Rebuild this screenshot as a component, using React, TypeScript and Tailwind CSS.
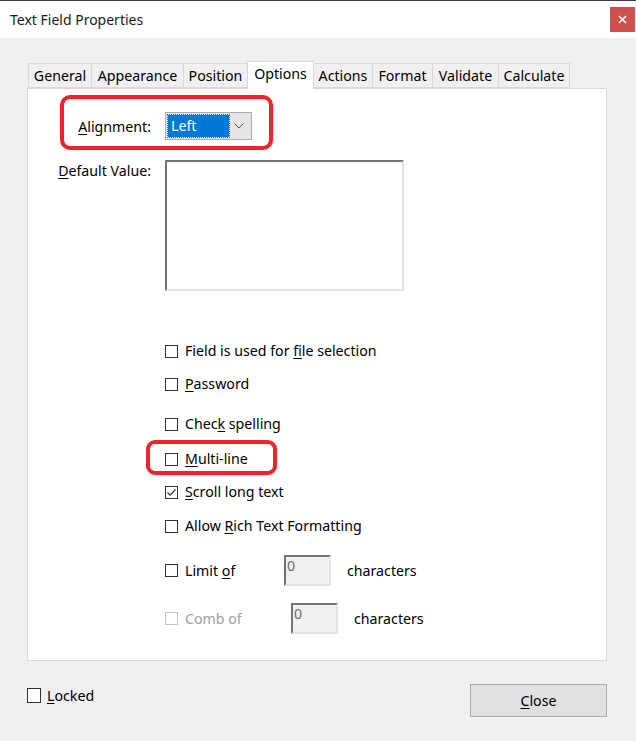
import React from 'react';

const font = { fontFamily: '"Noto Sans", "Open Sans", sans-serif' };

const U: React.FC<{ children: React.ReactNode }> = ({ children }) => (
  <span className="underline underline-offset-2 decoration-1">{children}</span>
);

const Check: React.FC<{ checked?: boolean; disabled?: boolean }> = ({ checked, disabled }) => (
  <span
    className={`w-[13px] h-[13px] flex items-center justify-center bg-white border shrink-0 ${
      disabled ? 'border-[#c5c5c5]' : 'border-[#333]'
    }`}
  >
    {checked && (
      <svg width="11" height="11" viewBox="0 0 11 11">
        <path d="M1.5 5.5 L4.2 8.2 L9.5 2.5" fill="none" stroke="#333" strokeWidth="1.2" />
      </svg>
    )}
  </span>
);

const CheckRow: React.FC<{ children: React.ReactNode; checked?: boolean; className?: string }> = ({
  children,
  checked,
  className = '',
}) => (
  <div className={`flex items-center h-[20px] gap-[7px] pl-[137px] ${className}`}>
    <Check checked={checked} />
    <span>{children}</span>
  </div>
);

const tabs = ['General', 'Appearance', 'Position', 'Options', 'Actions', 'Format', 'Validate', 'Calculate'];
const tabWidths = ['w-[64px]', 'w-[93px]', 'w-[65px]', 'w-[67px]', 'w-[60px]', 'w-[61px]', 'w-[67px]', 'w-[72px]'];

export default function App() {
  return (
    <div
      className="w-[636px] h-[741px] bg-[#f0f0f0] border-t border-[#3a3a3a] flex flex-col text-[14.2px] text-black"
      style={font}
    >
      {/* Title bar */}
      <div className="h-[37px] bg-white flex items-center justify-between pl-[10px] pr-[1px]">
        <span className="text-[14px] text-[#1a1a1a]">Text Field Properties</span>
        <button className="w-[25px] h-[25px] bg-[#d0504f] flex items-center justify-center">
          <svg width="9" height="9" viewBox="0 0 9 9">
            <path d="M1 1 L8 8 M8 1 L1 8" stroke="white" strokeWidth="1.6" />
          </svg>
        </button>
      </div>

      {/* Body */}
      <div className="pl-[27px] pr-[29px] pt-[23px] flex flex-col">
        {/* Tabs */}
        <div className="flex items-end pl-[1px] h-[27px]">
          {tabs.map((t, i) =>
            t === 'Options' ? (
              <div
                key={t}
                className={`${tabWidths[i]} h-[28px] bg-white border border-b-0 border-[#d9d9d9] -ml-[1px] -mb-[1px] relative z-10 flex items-center justify-center pb-[3px]`}
              >
                {t}
              </div>
            ) : (
              <div
                key={t}
                className={`${tabWidths[i]} h-[25px] border border-[#d9d9d9] -ml-[1px] first:ml-0 flex items-center justify-center`}
              >
                {t}
              </div>
            )
          )}
        </div>

        {/* Panel */}
        <div className="h-[573px] bg-white border border-[#d9d9d9] relative">
          {/* annotation boxes */}
          <div className="absolute left-[32px] top-[6px] w-[213px] h-[55px] border-[4px] border-[#f0222a] rounded-[10px]" />
          <div className="absolute left-[118px] top-[351px] w-[131px] h-[35px] border-[4px] border-[#f0222a] rounded-[9px]" />

          {/* Alignment */}
          <div className="flex items-center mt-[23px] h-[28px]">
            <div className="w-[137px] pr-[14px] text-right pt-[2px]">
              <U>A</U>lignment:
            </div>
            <div className="w-[87px] h-[28px] bg-[#e5e5e5] border border-[#adadad] flex items-center p-[2px]">
              <div className="w-[61px] h-[22px] bg-[#0078d7] text-white flex items-center pl-[3px] outline-1 outline-dotted outline-[#5a5a5a]">
                Left
              </div>
              <div className="flex-1 flex items-center justify-center">
                <svg width="10" height="6" viewBox="0 0 10 6">
                  <path d="M0.5 0.5 L5 5 L9.5 0.5" fill="none" stroke="#555" strokeWidth="1" />
                </svg>
              </div>
            </div>
          </div>

          {/* Default value */}
          <div className="flex mt-[20px]">
            <div className="w-[137px] pr-[14px] text-right">
              <U>D</U>efault Value:
            </div>
            <div className="w-[239px] h-[131px] bg-white border-[2px] border-t-[#737373] border-l-[#737373] border-r-[#e3e3e3] border-b-[#e3e3e3]" />
          </div>

          {/* Checkboxes */}
          <CheckRow className="mt-[50px]">
            Field is used for <U>f</U>ile selection
          </CheckRow>
          <CheckRow className="mt-[13px]">
            <U>P</U>assword
          </CheckRow>
          <CheckRow className="mt-[20px]">
            Chec<U>k</U> spelling
          </CheckRow>
          <CheckRow className="mt-[15px]">
            <U>M</U>ulti-line
          </CheckRow>
          <CheckRow className="mt-[13px]" checked>
            <U>S</U>croll long text
          </CheckRow>
          <CheckRow className="mt-[14px]">
            Allow <U>R</U>ich Text Formatting
          </CheckRow>

          {/* Limit of */}
          <div className="flex items-center pl-[137px] mt-[19px] h-[31px]">
            <Check />
            <span className="ml-[7px] w-[99px]">
              Limit <U>o</U>f
            </span>
            <div className="w-[47px] h-[31px] bg-[#f0f0f0] border-[2px] border-t-[#737373] border-l-[#737373] border-r-[#e3e3e3] border-b-[#e3e3e3] text-[#6d6d6d] pl-[1px] leading-[18px]">
              0
            </div>
            <span className="ml-[16px]">characters</span>
          </div>

          {/* Comb of */}
          <div className="flex items-center pl-[137px] mt-[17px] h-[31px]">
            <Check disabled />
            <span className="ml-[7px] w-[106px] text-[#a0a0a0]">Comb of</span>
            <div className="w-[47px] h-[31px] bg-[#f0f0f0] border-[2px] border-t-[#737373] border-l-[#737373] border-r-[#e3e3e3] border-b-[#e3e3e3] text-[#6d6d6d] pl-[1px] leading-[18px]">
              0
            </div>
            <span className="ml-[16px]">characters</span>
          </div>
        </div>

        {/* Footer */}
        <div className="flex items-center justify-between mt-[23px]">
          <div className="flex items-center gap-[6px] -mt-[10px]">
            <span className="w-[14px] h-[15px] bg-white border border-[#333]" />
            <span>
              <U>L</U>ocked
            </span>
          </div>
          <button className="w-[137px] h-[33px] bg-[#e1e1e1] border border-[#adadad] flex items-center justify-center">
            <span>
              <U>C</U>lose
            </span>
          </button>
        </div>
      </div>
    </div>
  );
}
